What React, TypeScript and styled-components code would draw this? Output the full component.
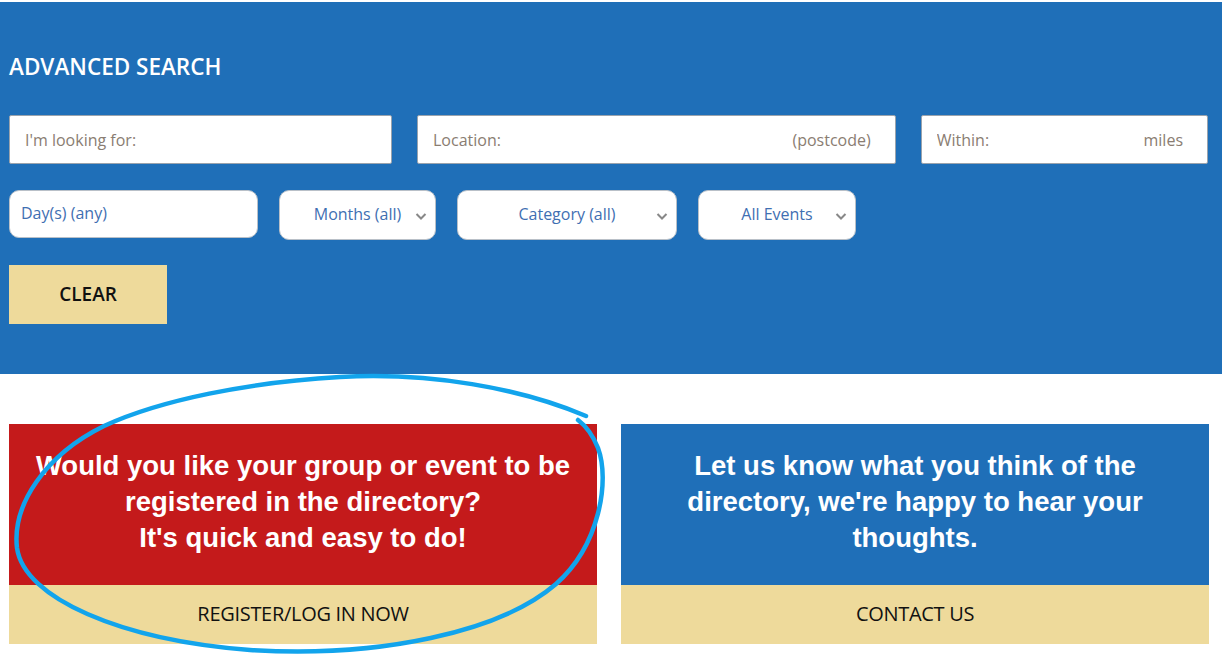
import React from 'react'
import styled, { createGlobalStyle } from 'styled-components'

const GlobalStyle = createGlobalStyle`
  html, body {
    margin: 0;
    padding: 0;
    background: #fff;
    font-family: "Open Sans", "Liberation Sans", sans-serif;
  }
  * {
    box-sizing: border-box;
  }
`

const Page = styled.div`
  position: relative;
  width: 1222px;
  height: 659px;
  padding-top: 2px;
  overflow: hidden;
`

const SearchPanel = styled.section`
  background-color: #1f6fb8;
  height: 372px;
  padding: 50px 14px 0 9px;
`

const Heading = styled.h2`
  margin: 0 0 33px;
  color: #fff;
  font-size: 22.5px;
  font-weight: 600;
  line-height: 30px;
`

const Row = styled.div<{ $gap: number }>`
  display: flex;
  gap: ${(p) => p.$gap}px;
  margin-bottom: 26px;
`

const Field = styled.label<{ $width: number }>`
  display: flex;
  align-items: center;
  width: ${(p) => p.$width}px;
  height: 49px;
  background: #fff;
  border: 1px solid #9aa3ad;
  border-radius: 2px;
  padding: 0 24px 0 15px;
`

const Input = styled.input`
  flex: 1;
  min-width: 0;
  border: 0;
  outline: none;
  background: transparent;
  font-family: inherit;
  font-size: 16px;
  color: #333;
  padding: 0;
  &::placeholder {
    color: #8a7d72;
  }
`

const Suffix = styled.span`
  font-size: 16px;
  color: #8a7d72;
`

const DayField = styled.label`
  display: flex;
  width: 249px;
  height: 48px;
  background: #fff;
  border: 1px solid #b9c0c8;
  border-radius: 10px;
  padding: 10px 11px 0;
`

const DayInput = styled.input`
  width: 100%;
  height: 24px;
  border: 0;
  outline: none;
  background: transparent;
  font-family: inherit;
  font-size: 16px;
  padding: 0;
  &::placeholder {
    color: #3f6fb2;
  }
`

const Select = styled.div<{ $width: number }>`
  position: relative;
  display: flex;
  align-items: center;
  justify-content: center;
  width: ${(p) => p.$width}px;
  height: 50px;
  padding-bottom: 2px;
  background: #fff;
  border: 1px solid #b9c0c8;
  border-radius: 10px;
  font-size: 16px;
  color: #3f6fb2;
  cursor: pointer;
`

const Chevron = styled.svg`
  position: absolute;
  right: 8px;
  top: 20px;
  width: 12px;
  height: 10px;
`

const ClearButton = styled.button`
  display: block;
  width: 158px;
  height: 59px;
  margin-top: -1px;
  padding-bottom: 2px;
  border: 0;
  background: #eeda9b;
  font-family: inherit;
  font-size: 19px;
  font-weight: 600;
  color: #111;
  cursor: pointer;
`

const Cards = styled.div`
  display: grid;
  grid-template-columns: 588px 588px;
  gap: 24px;
  padding: 50px 0 0 9px;
`

const Card = styled.div`
  display: flex;
  flex-direction: column;
`

const CardBody = styled.div<{ $tone: 'red' | 'blue' }>`
  height: 161px;
  display: flex;
  align-items: center;
  justify-content: center;
  padding: 0 20px 6px;
  background: ${(p) => (p.$tone === 'red' ? '#c41a1b' : '#1f6fb8')};
  color: #fff;
  font-family: "Liberation Sans", Arial, sans-serif;
  font-weight: 700;
  font-size: 27.5px;
  line-height: 36px;
  text-align: center;
`

const CardAction = styled.a`
  height: 59px;
  display: flex;
  align-items: center;
  justify-content: center;
  padding-bottom: 3px;
  background: #eeda9b;
  color: #111;
  font-size: 20px;
  font-weight: 500;
  text-decoration: none;
  letter-spacing: -0.3px;
`

const Scribble = styled.svg`
  position: absolute;
  left: 0;
  top: 0;
  width: 1222px;
  height: 659px;
  pointer-events: none;
`

const ChevronIcon = () => (
  <Chevron viewBox="0 0 12 10">
    <path d="M1.5 3 L6 7.5 L10.5 3" fill="none" stroke="#888" strokeWidth="2" />
  </Chevron>
)

const App = () => {
  return (
    <Page>
      <GlobalStyle />
      <SearchPanel>
        <Heading>ADVANCED SEARCH</Heading>
        <Row $gap={25}>
          <Field $width={384}>
            <Input placeholder="I'm looking for:" />
          </Field>
          <Field $width={480}>
            <Input placeholder="Location:" />
            <Suffix>(postcode)</Suffix>
          </Field>
          <Field $width={288}>
            <Input placeholder="Within:" />
            <Suffix>miles</Suffix>
          </Field>
        </Row>
        <Row $gap={21}>
          <DayField>
            <DayInput placeholder="Day(s) (any)" />
          </DayField>
          <Select $width={157}>
            Months (all)
            <ChevronIcon />
          </Select>
          <Select $width={220}>
            Category (all)
            <ChevronIcon />
          </Select>
          <Select $width={158}>
            All Events
            <ChevronIcon />
          </Select>
        </Row>
        <ClearButton>CLEAR</ClearButton>
      </SearchPanel>
      <Cards>
        <Card>
          <CardBody $tone="red">
            Would you like your group or event to be registered in the directory?
            <br />
            It's quick and easy to do!
          </CardBody>
          <CardAction href="#">REGISTER/LOG IN NOW</CardAction>
        </Card>
        <Card>
          <CardBody $tone="blue">
            Let us know what you think of the directory, we're happy to hear your thoughts.
          </CardBody>
          <CardAction href="#">CONTACT US</CardAction>
        </Card>
      </Cards>
      <Scribble viewBox="0 0 1222 659">
        <path
          d="M586 416 C520 388 430 372 340 377 C250 382 160 400 104 426 C45 455 12 505 17 548 C24 598 120 640 250 650 C380 658 500 632 556 584 C600 545 610 480 598 448 C592 433 586 426 578 420"
          fill="none"
          stroke="#12a4ec"
          strokeWidth="4.5"
          strokeLinecap="round"
        />
      </Scribble>
    </Page>
  )
}

export default App
